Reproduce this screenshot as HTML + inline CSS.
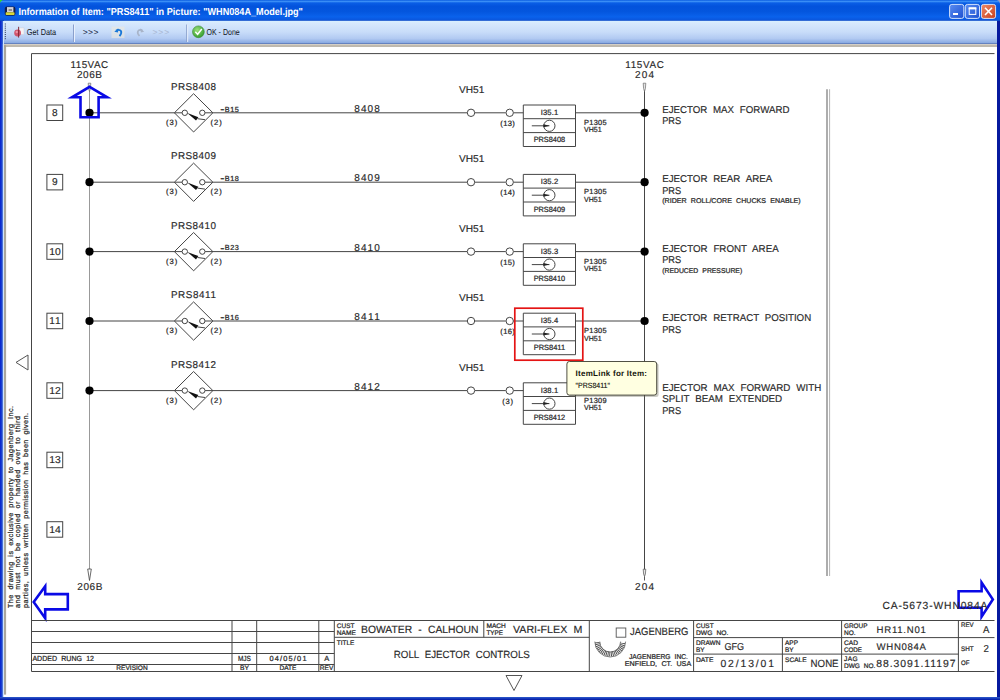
<!DOCTYPE html>
<html lang="en"><head><meta charset="utf-8">
<title>Information of Item: "PRS8411" in Picture: "WHN084A_Model.jpg"</title>
<style>
html,body{margin:0;padding:0;background:#fff;width:1000px;height:700px;overflow:hidden}
svg{display:block;position:absolute;left:0;top:0}
text{font-family:"Liberation Sans",sans-serif;white-space:pre;text-rendering:geometricPrecision}
.cad{stroke:#2a2a2a;stroke-width:0.16}
.sb{stroke:#2a2a2a;stroke-width:0.24}
.ln{stroke:#454545;stroke-width:1;fill:none}
.lg{stroke:#999;stroke-width:1;fill:none}
.bl{stroke:#0a0ae6;stroke-width:2.6;fill:none;stroke-linejoin:miter}
</style></head><body>
<svg width="1000" height="700" viewBox="0 0 1000 700" fill="#2a2a2a">
<defs>
<linearGradient id="tb" x1="0" y1="0" x2="0" y2="1">
<stop offset="0" stop-color="#0a5ce0"/><stop offset="0.07" stop-color="#3a8ef6"/><stop offset="0.14" stop-color="#0a5ee6"/><stop offset="0.3" stop-color="#0352dc"/><stop offset="0.55" stop-color="#0456de"/><stop offset="0.8" stop-color="#0a62ec"/><stop offset="0.93" stop-color="#0a58e0"/><stop offset="1" stop-color="#0a44c0"/>
</linearGradient>
<linearGradient id="lb" x1="0" y1="0" x2="1" y2="0"><stop offset="0" stop-color="#0420cc"/><stop offset="1" stop-color="#2c5cd2"/></linearGradient>
<linearGradient id="bb" x1="0" y1="0" x2="0" y2="1"><stop offset="0" stop-color="#2f5ccc"/><stop offset="1" stop-color="#0018a6"/></linearGradient>
<linearGradient id="tool" x1="0" y1="0" x2="0" y2="1">
<stop offset="0" stop-color="#d9f0ff"/><stop offset="0.12" stop-color="#d6e8fd"/><stop offset="0.5" stop-color="#c8dcf9"/><stop offset="0.78" stop-color="#b2caf2"/><stop offset="1" stop-color="#84a6e0"/>
</linearGradient>
<linearGradient id="btn" x1="0" y1="0" x2="1" y2="1">
<stop offset="0" stop-color="#5a8df2"/><stop offset="1" stop-color="#1c4fd0"/>
</linearGradient>
<linearGradient id="cls" x1="0" y1="0" x2="1" y2="1">
<stop offset="0" stop-color="#ee8a68"/><stop offset="1" stop-color="#c8401c"/>
</linearGradient>
<radialGradient id="grn" cx="0.4" cy="0.35" r="0.7">
<stop offset="0" stop-color="#9adf7a"/><stop offset="1" stop-color="#2f9a2a"/>
</radialGradient>
</defs>

<rect x="0" y="0" width="1000" height="700" fill="#0a30c4"/>
<rect x="0" y="21" width="3" height="679" fill="url(#lb)"/>
<rect x="997" y="21" width="3" height="679" fill="#06199e"/>
<rect x="0" y="697" width="1000" height="3" fill="url(#bb)"/>
<rect x="2.9" y="44" width="994.1" height="653" fill="#ffffff"/>
<rect x="2.9" y="21" width="1.1" height="676" fill="#cfe6fd"/>
<rect x="4" y="44.6" width="2.1" height="650" fill="#aaa69c"/>
<rect x="0" y="0" width="1000" height="21" fill="url(#tb)"/>
<rect x="4.8" y="6.4" width="10.6" height="9.3" rx="2.2" fill="#16204a"/>
<rect x="7" y="7.1" width="6.4" height="5" fill="#d2d2da"/><rect x="8.6" y="9.2" width="3.4" height="1.6" fill="#7a7a80"/>
<rect x="5.7" y="12.3" width="8.8" height="2.6" rx="0.6" fill="#d6d63a"/>
<path d="M0 0 H3 Q0.5 0.5 0 3z" fill="#2edc20"/><path d="M996.8 0 H1000 V3.4 Q999.5 0.5 996.8 0z" fill="#9a9fca"/>
<text x="18.4" y="15.1" font-size="10.1" textLength="284.5" lengthAdjust="spacingAndGlyphs" fill="#ffffff" font-weight="700">Information of Item: "PRS8411" in Picture: "WHN084A_Model.jpg"</text>
<rect x="949.6" y="4.4" width="14.2" height="14" rx="2.2" fill="url(#btn)" stroke="#e8f0ff" stroke-width="0.9"/>
<rect x="965.3" y="4.4" width="14.2" height="14" rx="2.2" fill="url(#btn)" stroke="#e8f0ff" stroke-width="0.9"/>
<rect x="981.4" y="4.4" width="14.2" height="14" rx="2.2" fill="url(#cls)" stroke="#e8f0ff" stroke-width="0.9"/>
<rect x="953" y="13" width="5" height="2" fill="#fff"/>
<rect x="969.2" y="8" width="6.6" height="6.4" fill="none" stroke="#fff" stroke-width="1"/><rect x="968.7" y="7.4" width="7.6" height="2" fill="#fff"/>
<path d="M985 7.8 L992 15 M992 7.8 L985 15" stroke="#fff" stroke-width="1.6" fill="none"/>
<rect x="4" y="20.8" width="993" height="22.6" fill="url(#tool)"/>
<rect x="4" y="43.2" width="993" height="1" fill="#6f8cbc"/>
<rect x="4" y="44.2" width="993" height="1.2" fill="#d0c9bc"/>
<rect x="4" y="45.4" width="993" height="1.3" fill="#a39c8e"/>
<path d="M5.3 23.5 V40" stroke="#27324a" stroke-width="1" stroke-dasharray="1 1.1" fill="none"/>
<path d="M19.2 27.8 h4.8 v6.6 h-4.8z" fill="#f6f2f4" stroke="#c8ccd8" stroke-width="0.5"/><circle cx="17.6" cy="33" r="3.4" fill="#d2465e" opacity="0.9"/><circle cx="16.8" cy="32" r="1.2" fill="#f0a0b0" opacity="0.8"/><path d="M18.6 26.8 V37.6" stroke="#7a2030" stroke-width="0.9"/>
<text x="26.8" y="35" font-size="8.6" textLength="29.4" lengthAdjust="spacingAndGlyphs" fill="#10141c">Get Data</text>
<path d="M73.5 24.5 V42" stroke="#8aa0cc" stroke-width="1"/><path d="M74.5 24.5 V42" stroke="#e8f0fd" stroke-width="1"/>
<text x="82.8" y="35" font-size="8.5" textLength="15.6" lengthAdjust="spacing" fill="#1c2a48">&gt;&gt;&gt;</text>
<rect x="111.5" y="26.6" width="13" height="11.4" fill="#efe9dc" opacity="0.6"/>
<path d="M116 30.5 C121 28.5 123 32 119.5 36.2" stroke="#1a78d8" stroke-width="1.8" fill="none"/><path d="M114.3 31.8 L118.3 28.2 L118 32.5z" fill="#1a78d8"/>
<path d="M142.5 30.5 C138 28.5 136 32.5 139.5 36" stroke="#a8b4c8" stroke-width="1.6" fill="none"/><path d="M144.2 31.8 L140.5 28.2 L140.8 32.5z" fill="#a8b4c8"/>
<text x="152.5" y="35" font-size="8.5" textLength="16.6" lengthAdjust="spacing" fill="#a9b8d4">&gt;&gt;&gt;</text>
<path d="M186.7 24.5 V42" stroke="#8aa0cc" stroke-width="1"/><path d="M187.7 24.5 V42" stroke="#e8f0fd" stroke-width="1"/>
<circle cx="198.4" cy="31.8" r="5.9" fill="url(#grn)" stroke="#3a8a30" stroke-width="0.6"/><path d="M195.3 31.8 L197.6 34.3 L201.8 29" stroke="#fff" stroke-width="1.5" fill="none"/>
<text x="206.5" y="35" font-size="8.6" textLength="33.2" lengthAdjust="spacingAndGlyphs" fill="#10141c">OK - Done</text>
<path class="ln" d="M994.5 53.6 H31.5" stroke="#7d7d7d"/><path class="ln" d="M31.5 53.6 V671.5" stroke="#333"/>
<path d="M16 362.4 L28 355 V370z" stroke="#555" stroke-width="1" fill="none"/>
<path d="M506 675.5 H522 L514 690.5z" stroke="#555" stroke-width="1" fill="none"/>
<g transform="rotate(-90)">
<text x="-608" y="12.6" font-size="7.2" textLength="202" lengthAdjust="spacing" class="sb" word-spacing="2.30">The drawing is exclusive property to Jagenberg Inc.</text>
<text x="-608" y="20.4" font-size="7.2" textLength="192" lengthAdjust="spacing" class="sb" word-spacing="2.30">and must not be copied or handed over to third</text>
<text x="-608" y="28.2" font-size="7.2" textLength="195" lengthAdjust="spacing" class="sb" word-spacing="2.30">parties, unless written permission has been given.</text>
</g>
<path class="lg" d="M89.5 88 V571"/>
<path class="ln" d="M644.5 90 V571" stroke="#333"/>
<path d="M827 89.2 V576" stroke="#999" stroke-width="1.6" fill="none"/><path d="M829.6 89.2 V576" stroke="#b4b4b4" stroke-width="1" fill="none"/>
<path d="M88.2 83.2 H90.8 L90.4 88.5 L89.5 91.5 L88.6 88.5z" fill="#e4e4e4" stroke="#6a6a6a" stroke-width="0.7"/>
<path d="M87.7 569 L89.5 580.5 L91.3 569z" fill="#fff" stroke="#444" stroke-width="0.8"/>
<path d="M643.2 83.2 H645.8 L645.4 88.5 L644.5 91.5 L643.6 88.5z" fill="#e4e4e4" stroke="#6a6a6a" stroke-width="0.7"/>
<path d="M643.2 569.2 H645.8 L645.4 574 L644.5 576.5 L643.6 574z" fill="#e4e4e4" stroke="#555" stroke-width="0.7"/><path d="M644.5 576.5 V580.5" stroke="#444" stroke-width="0.9"/>
<text x="89.3" y="67.7" font-size="9.9" text-anchor="middle" textLength="37.5" lengthAdjust="spacing" class="cad">115VAC</text>
<text x="89.5" y="78.2" font-size="10" text-anchor="middle" textLength="25" lengthAdjust="spacing" class="cad">206B</text>
<text x="644.6" y="67.6" font-size="9.9" text-anchor="middle" textLength="38.5" lengthAdjust="spacing" class="cad">115VAC</text>
<text x="644.6" y="78.4" font-size="10" text-anchor="middle" textLength="19" lengthAdjust="spacing" class="cad">204</text>
<text x="89.8" y="590.2" font-size="10" text-anchor="middle" textLength="25" lengthAdjust="spacing" class="cad">206B</text>
<text x="644.6" y="590.2" font-size="10" text-anchor="middle" textLength="19" lengthAdjust="spacing" class="cad">204</text>
<rect x="46.9" y="105.0" width="15.8" height="15.5" fill="#fff" stroke="#444" stroke-width="1"/>
<text x="54.9" y="116.0" font-size="10" text-anchor="middle" textLength="5.6" lengthAdjust="spacingAndGlyphs" class="cad">8</text>
<path class="ln" d="M89.5 112.8 H182 M205.1 112.8 H467 M475 112.8 H505.7 M513.7 112.8 H523.3 M575.5 112.8 H644.5"/>
<circle cx="89.5" cy="112.8" r="4.1" fill="#000"/><circle cx="644.6" cy="112.8" r="4.1" fill="#000"/>
<path class="ln" d="M174.4 112.8 L193.6 93.7 L212.9 112.8 L193.6 132.0z"/>
<circle class="ln" cx="184.8" cy="112.8" r="2.7"/><circle class="ln" cx="202.3" cy="112.8" r="2.7"/>
<path d="M187.3 113.1 L198.4 117.3 L196 120.6z" fill="#111"/><path class="ln" d="M197.5 118.7 L205 119.7"/>
<text x="193.4" y="89.9" font-size="9.9" text-anchor="middle" textLength="45" lengthAdjust="spacing" class="cad">PRS8408</text>
<text x="220.2" y="111.6" font-size="7.3" class="sb" textLength="18.6" lengthAdjust="spacing"><tspan font-size="12.5" dy="1.1">-</tspan><tspan dy="-1.1">B15</tspan></text>
<text x="166" y="125.0" font-size="7.6" textLength="11.2" lengthAdjust="spacing" class="sb">(3)</text>
<text x="210.6" y="125.0" font-size="7.6" textLength="11.2" lengthAdjust="spacing" class="sb">(2)</text>
<text x="367" y="111.9" font-size="10" text-anchor="middle" textLength="25.6" lengthAdjust="spacing" class="cad">8408</text>
<text x="471.6" y="92.9" font-size="9.9" text-anchor="middle" textLength="25.4" lengthAdjust="spacingAndGlyphs" class="cad">VH51</text>
<circle class="ln" cx="471" cy="112.8" r="3.7"/><circle class="ln" cx="509.7" cy="112.8" r="3.7"/>
<text x="507.6" y="125.8" font-size="7.6" text-anchor="middle" textLength="14.6" lengthAdjust="spacing" class="sb">(13)</text>
<path class="ln" d="M523.3 105.0 H575.5 V146.5 H523.3z M523.3 118.7 H575.5 M523.3 132.6 H575.5"/>
<text x="549.4" y="114.8" font-size="7.6" text-anchor="middle" textLength="17.5" lengthAdjust="spacing" class="sb">I35.1</text>
<circle class="ln" cx="549.4" cy="125.8" r="5.6"/><path class="ln" d="M531.8 125.8 H549.4"/><path d="M549.6 125.8 L543.4 124.3 V127.3z" fill="#222"/>
<text x="549.4" y="142.2" font-size="7.6" text-anchor="middle" textLength="31.5" lengthAdjust="spacingAndGlyphs" class="sb">PRS8408</text>
<text x="584" y="125.0" font-size="7.4" textLength="22.6" lengthAdjust="spacing" class="sb">P1305</text>
<text x="584" y="132.4" font-size="7.4" textLength="17.6" lengthAdjust="spacingAndGlyphs" class="sb">VH51</text>
<text x="662.2" y="112.8" font-size="9.9" textLength="127.2" lengthAdjust="spacingAndGlyphs" class="cad" word-spacing="3.17">EJECTOR MAX FORWARD</text>
<text x="662.2" y="124.4" font-size="9.9" textLength="19" lengthAdjust="spacingAndGlyphs" class="cad">PRS</text>
<rect x="46.9" y="174.4" width="15.8" height="15.5" fill="#fff" stroke="#444" stroke-width="1"/>
<text x="54.9" y="185.4" font-size="10" text-anchor="middle" textLength="5.6" lengthAdjust="spacingAndGlyphs" class="cad">9</text>
<path class="ln" d="M89.5 182.2 H182 M205.1 182.2 H467 M475 182.2 H505.7 M513.7 182.2 H523.3 M575.5 182.2 H644.5"/>
<circle cx="89.5" cy="182.2" r="4.1" fill="#000"/><circle cx="644.6" cy="182.2" r="4.1" fill="#000"/>
<path class="ln" d="M174.4 182.2 L193.6 163.1 L212.9 182.2 L193.6 201.4z"/>
<circle class="ln" cx="184.8" cy="182.2" r="2.7"/><circle class="ln" cx="202.3" cy="182.2" r="2.7"/>
<path d="M187.3 182.5 L198.4 186.7 L196 190.0z" fill="#111"/><path class="ln" d="M197.5 188.1 L205 189.1"/>
<text x="193.4" y="159.3" font-size="9.9" text-anchor="middle" textLength="45" lengthAdjust="spacing" class="cad">PRS8409</text>
<text x="220.2" y="181.0" font-size="7.3" class="sb" textLength="18.6" lengthAdjust="spacing"><tspan font-size="12.5" dy="1.1">-</tspan><tspan dy="-1.1">B18</tspan></text>
<text x="166" y="194.4" font-size="7.6" textLength="11.2" lengthAdjust="spacing" class="sb">(3)</text>
<text x="210.6" y="194.4" font-size="7.6" textLength="11.2" lengthAdjust="spacing" class="sb">(2)</text>
<text x="367" y="181.3" font-size="10" text-anchor="middle" textLength="25.6" lengthAdjust="spacing" class="cad">8409</text>
<text x="471.6" y="162.3" font-size="9.9" text-anchor="middle" textLength="25.4" lengthAdjust="spacingAndGlyphs" class="cad">VH51</text>
<circle class="ln" cx="471" cy="182.2" r="3.7"/><circle class="ln" cx="509.7" cy="182.2" r="3.7"/>
<text x="507.6" y="195.2" font-size="7.6" text-anchor="middle" textLength="14.6" lengthAdjust="spacing" class="sb">(14)</text>
<path class="ln" d="M523.3 174.4 H575.5 V215.9 H523.3z M523.3 188.1 H575.5 M523.3 202.0 H575.5"/>
<text x="549.4" y="184.2" font-size="7.6" text-anchor="middle" textLength="17.5" lengthAdjust="spacing" class="sb">I35.2</text>
<circle class="ln" cx="549.4" cy="195.2" r="5.6"/><path class="ln" d="M531.8 195.2 H549.4"/><path d="M549.6 195.2 L543.4 193.7 V196.7z" fill="#222"/>
<text x="549.4" y="211.6" font-size="7.6" text-anchor="middle" textLength="31.5" lengthAdjust="spacingAndGlyphs" class="sb">PRS8409</text>
<text x="584" y="194.4" font-size="7.4" textLength="22.6" lengthAdjust="spacing" class="sb">P1305</text>
<text x="584" y="201.8" font-size="7.4" textLength="17.6" lengthAdjust="spacingAndGlyphs" class="sb">VH51</text>
<text x="662.2" y="182.2" font-size="9.9" textLength="110" lengthAdjust="spacingAndGlyphs" class="cad" word-spacing="3.17">EJECTOR REAR AREA</text>
<text x="662.2" y="193.8" font-size="9.9" textLength="19" lengthAdjust="spacingAndGlyphs" class="cad">PRS</text>
<text x="662.2" y="203.1" font-size="7.0" textLength="138.5" lengthAdjust="spacingAndGlyphs" class="sb" word-spacing="2.24">(RIDER ROLL/CORE CHUCKS ENABLE)</text>
<rect x="46.9" y="243.8" width="15.8" height="15.5" fill="#fff" stroke="#444" stroke-width="1"/>
<text x="54.9" y="254.8" font-size="10" text-anchor="middle" textLength="11.5" lengthAdjust="spacingAndGlyphs" class="cad">10</text>
<path class="ln" d="M89.5 251.6 H182 M205.1 251.6 H467 M475 251.6 H505.7 M513.7 251.6 H523.3 M575.5 251.6 H644.5"/>
<circle cx="89.5" cy="251.6" r="4.1" fill="#000"/><circle cx="644.6" cy="251.6" r="4.1" fill="#000"/>
<path class="ln" d="M174.4 251.6 L193.6 232.5 L212.9 251.6 L193.6 270.8z"/>
<circle class="ln" cx="184.8" cy="251.6" r="2.7"/><circle class="ln" cx="202.3" cy="251.6" r="2.7"/>
<path d="M187.3 251.9 L198.4 256.1 L196 259.4z" fill="#111"/><path class="ln" d="M197.5 257.5 L205 258.5"/>
<text x="193.4" y="228.7" font-size="9.9" text-anchor="middle" textLength="45" lengthAdjust="spacing" class="cad">PRS8410</text>
<text x="220.2" y="250.4" font-size="7.3" class="sb" textLength="18.6" lengthAdjust="spacing"><tspan font-size="12.5" dy="1.1">-</tspan><tspan dy="-1.1">B23</tspan></text>
<text x="166" y="263.8" font-size="7.6" textLength="11.2" lengthAdjust="spacing" class="sb">(3)</text>
<text x="210.6" y="263.8" font-size="7.6" textLength="11.2" lengthAdjust="spacing" class="sb">(2)</text>
<text x="367" y="250.7" font-size="10" text-anchor="middle" textLength="25.6" lengthAdjust="spacing" class="cad">8410</text>
<text x="471.6" y="231.7" font-size="9.9" text-anchor="middle" textLength="25.4" lengthAdjust="spacingAndGlyphs" class="cad">VH51</text>
<circle class="ln" cx="471" cy="251.6" r="3.7"/><circle class="ln" cx="509.7" cy="251.6" r="3.7"/>
<text x="507.6" y="264.6" font-size="7.6" text-anchor="middle" textLength="14.6" lengthAdjust="spacing" class="sb">(15)</text>
<path class="ln" d="M523.3 243.8 H575.5 V285.3 H523.3z M523.3 257.5 H575.5 M523.3 271.4 H575.5"/>
<text x="549.4" y="253.6" font-size="7.6" text-anchor="middle" textLength="17.5" lengthAdjust="spacing" class="sb">I35.3</text>
<circle class="ln" cx="549.4" cy="264.6" r="5.6"/><path class="ln" d="M531.8 264.6 H549.4"/><path d="M549.6 264.6 L543.4 263.1 V266.1z" fill="#222"/>
<text x="549.4" y="281.0" font-size="7.6" text-anchor="middle" textLength="31.5" lengthAdjust="spacingAndGlyphs" class="sb">PRS8410</text>
<text x="584" y="263.8" font-size="7.4" textLength="22.6" lengthAdjust="spacing" class="sb">P1305</text>
<text x="584" y="271.2" font-size="7.4" textLength="17.6" lengthAdjust="spacingAndGlyphs" class="sb">VH51</text>
<text x="662.2" y="251.6" font-size="9.9" textLength="116.5" lengthAdjust="spacingAndGlyphs" class="cad" word-spacing="3.17">EJECTOR FRONT AREA</text>
<text x="662.2" y="263.2" font-size="9.9" textLength="19" lengthAdjust="spacingAndGlyphs" class="cad">PRS</text>
<text x="662.2" y="272.5" font-size="7.0" textLength="80" lengthAdjust="spacingAndGlyphs" class="sb" word-spacing="2.24">(REDUCED PRESSURE)</text>
<rect x="46.9" y="313.2" width="15.8" height="15.5" fill="#fff" stroke="#444" stroke-width="1"/>
<text x="54.9" y="324.2" font-size="10" text-anchor="middle" textLength="11.5" lengthAdjust="spacing" class="cad">11</text>
<path class="ln" d="M89.5 321.0 H182 M205.1 321.0 H467 M475 321.0 H505.7 M513.7 321.0 H523.3 M575.5 321.0 H644.5"/>
<circle cx="89.5" cy="321.0" r="4.1" fill="#000"/><circle cx="644.6" cy="321.0" r="4.1" fill="#000"/>
<path class="ln" d="M174.4 321.0 L193.6 301.9 L212.9 321.0 L193.6 340.2z"/>
<circle class="ln" cx="184.8" cy="321.0" r="2.7"/><circle class="ln" cx="202.3" cy="321.0" r="2.7"/>
<path d="M187.3 321.3 L198.4 325.5 L196 328.8z" fill="#111"/><path class="ln" d="M197.5 326.9 L205 327.9"/>
<text x="193.4" y="298.1" font-size="9.9" text-anchor="middle" textLength="45" lengthAdjust="spacing" class="cad">PRS8411</text>
<text x="220.2" y="319.8" font-size="7.3" class="sb" textLength="18.6" lengthAdjust="spacing"><tspan font-size="12.5" dy="1.1">-</tspan><tspan dy="-1.1">B16</tspan></text>
<text x="166" y="333.2" font-size="7.6" textLength="11.2" lengthAdjust="spacing" class="sb">(3)</text>
<text x="210.6" y="333.2" font-size="7.6" textLength="11.2" lengthAdjust="spacing" class="sb">(2)</text>
<text x="367" y="320.1" font-size="10" text-anchor="middle" textLength="25.6" lengthAdjust="spacing" class="cad">8411</text>
<text x="471.6" y="301.1" font-size="9.9" text-anchor="middle" textLength="25.4" lengthAdjust="spacingAndGlyphs" class="cad">VH51</text>
<circle class="ln" cx="471" cy="321.0" r="3.7"/><circle class="ln" cx="509.7" cy="321.0" r="3.7"/>
<text x="507.6" y="334.0" font-size="7.6" text-anchor="middle" textLength="14.6" lengthAdjust="spacing" class="sb">(16)</text>
<path class="ln" d="M523.3 313.2 H575.5 V354.7 H523.3z M523.3 326.9 H575.5 M523.3 340.8 H575.5"/>
<text x="549.4" y="323.0" font-size="7.6" text-anchor="middle" textLength="17.5" lengthAdjust="spacing" class="sb">I35.4</text>
<circle class="ln" cx="549.4" cy="334.0" r="5.6"/><path class="ln" d="M531.8 334.0 H549.4"/><path d="M549.6 334.0 L543.4 332.5 V335.5z" fill="#222"/>
<text x="549.4" y="350.4" font-size="7.6" text-anchor="middle" textLength="31.5" lengthAdjust="spacingAndGlyphs" class="sb">PRS8411</text>
<text x="584" y="333.2" font-size="7.4" textLength="22.6" lengthAdjust="spacing" class="sb">P1305</text>
<text x="584" y="340.6" font-size="7.4" textLength="17.6" lengthAdjust="spacingAndGlyphs" class="sb">VH51</text>
<text x="662.2" y="321.0" font-size="9.9" textLength="149" lengthAdjust="spacingAndGlyphs" class="cad" word-spacing="3.17">EJECTOR RETRACT POSITION</text>
<text x="662.2" y="332.6" font-size="9.9" textLength="19" lengthAdjust="spacingAndGlyphs" class="cad">PRS</text>
<rect x="46.9" y="382.8" width="15.8" height="15.5" fill="#fff" stroke="#444" stroke-width="1"/>
<text x="54.9" y="393.8" font-size="10" text-anchor="middle" textLength="11.5" lengthAdjust="spacingAndGlyphs" class="cad">12</text>
<path class="ln" d="M89.5 390.6 H182 M205.1 390.6 H467 M475 390.6 H505.7 M513.7 390.6 H523.3 M575.5 390.6 H644.5"/>
<circle cx="89.5" cy="390.6" r="4.1" fill="#000"/><circle cx="644.6" cy="390.6" r="4.1" fill="#000"/>
<path class="ln" d="M174.4 390.6 L193.6 371.5 L212.9 390.6 L193.6 409.8z"/>
<circle class="ln" cx="184.8" cy="390.6" r="2.7"/><circle class="ln" cx="202.3" cy="390.6" r="2.7"/>
<path d="M187.3 390.9 L198.4 395.1 L196 398.4z" fill="#111"/><path class="ln" d="M197.5 396.5 L205 397.5"/>
<text x="193.4" y="367.7" font-size="9.9" text-anchor="middle" textLength="45" lengthAdjust="spacing" class="cad">PRS8412</text>
<text x="166" y="402.8" font-size="7.6" textLength="11.2" lengthAdjust="spacing" class="sb">(3)</text>
<text x="210.6" y="402.8" font-size="7.6" textLength="11.2" lengthAdjust="spacing" class="sb">(2)</text>
<text x="367" y="389.7" font-size="10" text-anchor="middle" textLength="25.6" lengthAdjust="spacing" class="cad">8412</text>
<text x="471.6" y="370.7" font-size="9.9" text-anchor="middle" textLength="25.4" lengthAdjust="spacingAndGlyphs" class="cad">VH51</text>
<circle class="ln" cx="471" cy="390.6" r="3.7"/><circle class="ln" cx="509.7" cy="390.6" r="3.7"/>
<text x="507.6" y="403.6" font-size="7.6" text-anchor="middle" textLength="10.8" lengthAdjust="spacing" class="sb">(3)</text>
<path class="ln" d="M523.3 382.8 H575.5 V424.3 H523.3z M523.3 396.5 H575.5 M523.3 410.4 H575.5"/>
<text x="549.4" y="392.6" font-size="7.6" text-anchor="middle" textLength="17.5" lengthAdjust="spacing" class="sb">I38.1</text>
<circle class="ln" cx="549.4" cy="403.6" r="5.6"/><path class="ln" d="M531.8 403.6 H549.4"/><path d="M549.6 403.6 L543.4 402.1 V405.1z" fill="#222"/>
<text x="549.4" y="420.0" font-size="7.6" text-anchor="middle" textLength="31.5" lengthAdjust="spacingAndGlyphs" class="sb">PRS8412</text>
<text x="584" y="402.8" font-size="7.4" textLength="22.6" lengthAdjust="spacing" class="sb">P1309</text>
<text x="584" y="410.2" font-size="7.4" textLength="17.6" lengthAdjust="spacingAndGlyphs" class="sb">VH51</text>
<text x="662.2" y="390.6" font-size="9.9" textLength="159" lengthAdjust="spacingAndGlyphs" class="cad" word-spacing="3.17">EJECTOR MAX FORWARD WITH</text>
<text x="662.2" y="402.2" font-size="9.9" textLength="120" lengthAdjust="spacingAndGlyphs" class="cad" word-spacing="3.17">SPLIT BEAM EXTENDED</text>
<text x="662.2" y="413.8" font-size="9.9" textLength="19" lengthAdjust="spacingAndGlyphs" class="cad">PRS</text>
<rect x="46.9" y="452.2" width="15.8" height="15.5" fill="#fff" stroke="#444" stroke-width="1"/>
<text x="54.9" y="463.2" font-size="10" text-anchor="middle" textLength="11.5" lengthAdjust="spacingAndGlyphs" class="cad">13</text>
<rect x="46.9" y="521.7" width="15.8" height="15.5" fill="#fff" stroke="#444" stroke-width="1"/>
<text x="54.9" y="532.7" font-size="10" text-anchor="middle" textLength="11.5" lengthAdjust="spacingAndGlyphs" class="cad">14</text>
<rect x="514.8" y="308.2" width="68" height="52" fill="none" stroke="#e41414" stroke-width="1.7"/>
<rect x="568.6" y="363" width="90" height="34" rx="2.5" fill="#6a6a5a" opacity="0.35"/>
<rect x="566.9" y="361.5" width="89.8" height="33.6" rx="2.5" fill="#ffffe1" stroke="#3c3c30" stroke-width="0.9"/>
<text x="575.6" y="376.2" font-size="8" textLength="71.4" lengthAdjust="spacing" fill="#15150c" font-weight="700">ItemLink for Item:</text>
<text x="575.6" y="387.8" font-size="7.6" textLength="34.4" lengthAdjust="spacingAndGlyphs" fill="#15150f" stroke="#15150f" stroke-width="0.15">"PRS8411"</text>
<path class="bl" d="M89.6 86.8 L107.2 97.3 H98.6 V117.2 H80.5 V97.3 H72z"/>
<path class="bl" d="M33.7 602 L45.2 586.2 V594.1 H67.8 V609.4 H45.2 V618.2z"/>
<path class="bl" style="fill:#fff;fill-opacity:0.5" d="M992.8 599.4 L981.6 582.6 V591.2 H958.6 V607.8 H981.6 V616.6z"/>
<text x="882.4" y="608.8" font-size="10.3" textLength="105" lengthAdjust="spacing" class="cad">CA-5673-WHN084A</text>
<path class="ln" d="M31.5 620.5 H994.5 M31.5 671.5 H994.5"/>
<path class="ln" d="M31.5 631.5 H334.3 M31.5 642.5 H334.3 M31.5 653.5 H334.3 M31.5 664.5 H334.3"/>
<path class="ln" d="M232 620.5 V671.5 M256.7 620.5 V671.5 M318.8 620.5 V671.5 M334.3 620.5 V671.5"/>
<path class="ln" d="M334.3 637.3 H589.3 M483.8 620.5 V637.3 M589.3 620.5 V671.5 M693.6 620.5 V671.5"/>
<path class="ln" d="M693.6 637.6 H994.5 M693.6 654.1 H958.4 M782.4 637.6 V671.5 M841.6 620.5 V671.5 M958.4 620.5 V671.5"/>
<text x="32.4" y="661.1" font-size="7.4" textLength="61.6" lengthAdjust="spacingAndGlyphs" class="sb" word-spacing="2.37">ADDED RUNG 12</text>
<text x="132" y="670.1" font-size="6.6" text-anchor="middle" textLength="31.5" lengthAdjust="spacingAndGlyphs" class="sb">REVISION</text>
<text x="244.4" y="661.1" font-size="7.4" text-anchor="middle" textLength="13" lengthAdjust="spacingAndGlyphs" class="sb">MJS</text>
<text x="244.4" y="670.1" font-size="6.6" text-anchor="middle" textLength="9" lengthAdjust="spacingAndGlyphs" class="sb">BY</text>
<text x="288" y="661.1" font-size="7.4" text-anchor="middle" textLength="37" lengthAdjust="spacing" class="sb">04/05/01</text>
<text x="288" y="670.1" font-size="6.6" text-anchor="middle" textLength="17" lengthAdjust="spacingAndGlyphs" class="sb">DATE</text>
<text x="326.8" y="661.1" font-size="7.4" text-anchor="middle" textLength="5" lengthAdjust="spacingAndGlyphs" class="sb">A</text>
<text x="326.6" y="670.1" font-size="6.6" text-anchor="middle" textLength="13.5" lengthAdjust="spacingAndGlyphs" class="sb">REV</text>
<text x="336.8" y="628.2" font-size="6.6" textLength="17.6" lengthAdjust="spacingAndGlyphs" class="sb">CUST</text>
<text x="336.8" y="635.2" font-size="6.6" textLength="19" lengthAdjust="spacingAndGlyphs" class="sb">NAME</text>
<text x="361" y="633.1" font-size="10.5" textLength="117.5" lengthAdjust="spacingAndGlyphs" class="cad" word-spacing="3.36">BOWATER - CALHOUN</text>
<text x="486.4" y="628.2" font-size="6.6" textLength="19.4" lengthAdjust="spacingAndGlyphs" class="sb">MACH</text>
<text x="486.4" y="635.2" font-size="6.6" textLength="16.6" lengthAdjust="spacingAndGlyphs" class="sb">TYPE</text>
<text x="513" y="633.1" font-size="10.5" textLength="69.5" lengthAdjust="spacingAndGlyphs" class="cad" word-spacing="3.36">VARI-FLEX M</text>
<text x="336.8" y="644.5" font-size="6.6" textLength="17.6" lengthAdjust="spacingAndGlyphs" class="sb">TITLE</text>
<text x="461.8" y="657.6" font-size="10.4" text-anchor="middle" textLength="136" lengthAdjust="spacingAndGlyphs" class="cad" word-spacing="3.33">ROLL EJECTOR CONTROLS</text>
<rect x="616.2" y="628" width="9.6" height="9.2" fill="none" stroke="#555" stroke-width="0.9"/>
<path d="M597.3 642.2 A12.9 12.9 0 0 0 623 642.2" fill="none" stroke="#4a4a4a" stroke-width="4.6" stroke-dasharray="0.9 0.75"/>
<path d="M594.8 641.6 A15.3 15.3 0 0 0 625.6 641.6 M599.8 641.6 A10.4 10.4 0 0 0 620.6 641.6" fill="none" stroke="#444" stroke-width="0.7"/>
<text x="630" y="635.3" font-size="10.6" textLength="58.5" lengthAdjust="spacingAndGlyphs" class="cad">JAGENBERG</text>
<text x="629" y="658.9" font-size="7" textLength="59" lengthAdjust="spacingAndGlyphs" class="sb" word-spacing="2.24">JAGENBERG INC.</text>
<text x="624.8" y="666.2" font-size="7" textLength="66.4" lengthAdjust="spacingAndGlyphs" class="sb" word-spacing="2.24">ENFIELD, CT. USA</text>
<text x="696" y="628.2" font-size="6.6" textLength="17.6" lengthAdjust="spacingAndGlyphs" class="sb">CUST</text>
<text x="696" y="635.4" font-size="6.6" textLength="32.4" lengthAdjust="spacingAndGlyphs" class="sb" word-spacing="2.11">DWG NO.</text>
<text x="696" y="645" font-size="6.6" textLength="24.4" lengthAdjust="spacingAndGlyphs" class="sb">DRAWN</text>
<text x="696" y="651.8" font-size="6.6" textLength="8.6" lengthAdjust="spacingAndGlyphs" class="sb">BY</text>
<text x="724.4" y="650" font-size="10" textLength="19.6" lengthAdjust="spacingAndGlyphs" class="cad">GFG</text>
<text x="785" y="645" font-size="6.6" textLength="13" lengthAdjust="spacingAndGlyphs" class="sb">APP</text>
<text x="785" y="651.8" font-size="6.6" textLength="8.6" lengthAdjust="spacingAndGlyphs" class="sb">BY</text>
<text x="696" y="661.6" font-size="6.6" textLength="17.4" lengthAdjust="spacingAndGlyphs" class="sb">DATE</text>
<text x="720.4" y="667.4" font-size="10.4" textLength="53.6" lengthAdjust="spacing" class="cad">02/13/01</text>
<text x="785" y="661.6" font-size="6.6" textLength="21.6" lengthAdjust="spacingAndGlyphs" class="sb">SCALE</text>
<text x="810.6" y="667.4" font-size="10.4" textLength="28" lengthAdjust="spacingAndGlyphs" class="cad">NONE</text>
<text x="844" y="627.6" font-size="6.6" textLength="23.4" lengthAdjust="spacingAndGlyphs" class="sb">GROUP</text>
<text x="844" y="634.8" font-size="6.6" textLength="11.6" lengthAdjust="spacingAndGlyphs" class="sb">NO.</text>
<text x="876.6" y="632.5" font-size="9.6" textLength="49.2" lengthAdjust="spacing" class="cad">HR11.N01</text>
<text x="844" y="644.6" font-size="6.6" textLength="14" lengthAdjust="spacingAndGlyphs" class="sb">CAD</text>
<text x="844" y="651.8" font-size="6.6" textLength="18" lengthAdjust="spacingAndGlyphs" class="sb">CODE</text>
<text x="876.6" y="649.8" font-size="9.6" textLength="49.2" lengthAdjust="spacing" class="cad">WHN084A</text>
<text x="844" y="660.6" font-size="6.6" textLength="13.6" lengthAdjust="spacing" class="sb">JAG</text>
<text x="844" y="667.8" font-size="6.6" textLength="31.4" lengthAdjust="spacingAndGlyphs" class="sb" word-spacing="2.11">DWG NO.</text>
<text x="876.2" y="667.4" font-size="10.4" textLength="79.4" lengthAdjust="spacing" class="cad">88.3091.11197</text>
<text x="961" y="627.4" font-size="6.6" textLength="12.6" lengthAdjust="spacingAndGlyphs" class="sb">REV</text>
<text x="983" y="632.8" font-size="10" textLength="6.4" lengthAdjust="spacingAndGlyphs" class="cad">A</text>
<text x="961" y="651.2" font-size="6.6" textLength="12.6" lengthAdjust="spacingAndGlyphs" class="sb">SHT</text>
<text x="983.4" y="651.9" font-size="10" textLength="5.4" lengthAdjust="spacingAndGlyphs" class="cad">2</text>
<text x="961" y="665.4" font-size="6.6" textLength="8.4" lengthAdjust="spacingAndGlyphs" class="sb">OF</text>
</svg></body></html>
